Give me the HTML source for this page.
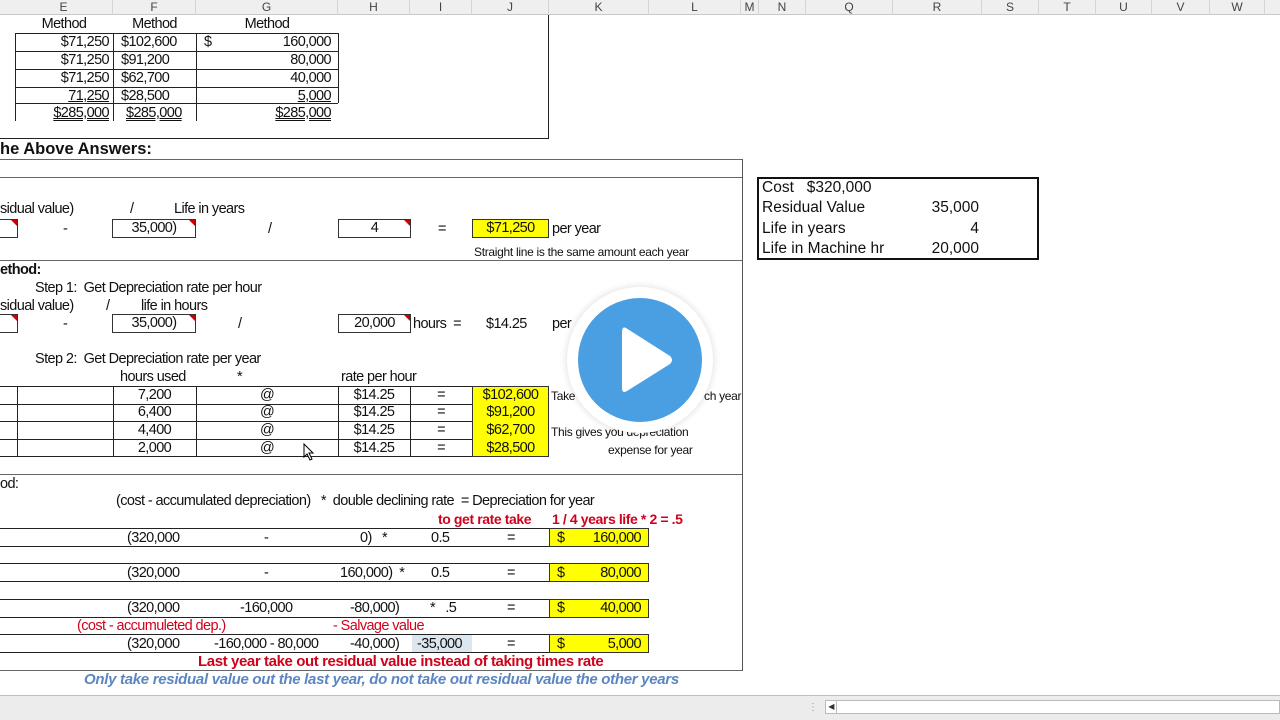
<!DOCTYPE html>
<html><head><meta charset="utf-8"><style>
*{margin:0;padding:0;box-sizing:border-box}
body{width:1280px;height:720px;overflow:hidden;background:#fff;position:relative;font-family:"Liberation Sans",Arial,sans-serif;font-size:14.5px;color:#111;letter-spacing:-0.6px}
.a{position:absolute;white-space:nowrap;line-height:16px}
.r{text-align:right}.c{text-align:center}
.h{position:absolute;height:1px;background:#222}
.v{position:absolute;width:1px;background:#222}
.hd{position:absolute;top:0;height:15px;font-size:12px;color:#444;text-align:center;line-height:15px;border-right:1px solid #d4d4d4;letter-spacing:0}
.bx{position:absolute;border:1px solid #333;height:19px;line-height:17px;text-align:center}
.bx i{position:absolute;right:0;top:0;border-style:solid;border-width:0 6px 6px 0;border-color:transparent #c00 transparent transparent}
.y{position:absolute;background:#ff0;border:1px solid #333;height:19px;line-height:17px}
.red{color:#d0021b;font-weight:bold}
.rl{color:#d0021b}
</style></head><body>
<div style="position:absolute;left:0;top:0;width:1280px;height:15px;background:#efefef;border-bottom:1px solid #c8c8c8"></div>
<div class="hd" style="left:15px;width:98px">E</div>
<div class="hd" style="left:113px;width:83px">F</div>
<div class="hd" style="left:196px;width:142px">G</div>
<div class="hd" style="left:338px;width:72px">H</div>
<div class="hd" style="left:410px;width:62px">I</div>
<div class="hd" style="left:472px;width:77px">J</div>
<div class="hd" style="left:549px;width:100px">K</div>
<div class="hd" style="left:649px;width:92px">L</div>
<div class="hd" style="left:741px;width:18px">M</div>
<div class="hd" style="left:759px;width:47px">N</div>
<div class="hd" style="left:806px;width:87px">Q</div>
<div class="hd" style="left:893px;width:89px">R</div>
<div class="hd" style="left:982px;width:57px">S</div>
<div class="hd" style="left:1039px;width:57px">T</div>
<div class="hd" style="left:1096px;width:56px">U</div>
<div class="hd" style="left:1152px;width:58px">V</div>
<div class="hd" style="left:1210px;width:55px">W</div>

<div class="a c" style="left:15px;top:16px;width:98px">Method</div>
<div class="a c" style="left:113px;top:16px;width:83px">Method</div>
<div class="a c" style="left:196px;top:16px;width:142px">Method</div>
<div class="h" style="left:15px;top:33px;width:323px"></div>
<div class="h" style="left:15px;top:51px;width:323px"></div>
<div class="h" style="left:15px;top:69px;width:323px"></div>
<div class="h" style="left:15px;top:87px;width:323px"></div>
<div class="h" style="left:15px;top:103px;width:323px"></div>
<div class="v" style="left:15px;top:33px;height:88px"></div>
<div class="v" style="left:113px;top:33px;height:88px"></div>
<div class="v" style="left:196px;top:33px;height:88px"></div>
<div class="v" style="left:338px;top:33px;height:70px"></div>
<div class="a r" style="left:15px;top:34px;width:94px">$71,250</div>
<div class="a r" style="left:15px;top:52px;width:94px">$71,250</div>
<div class="a r" style="left:15px;top:70px;width:94px">$71,250</div>
<div class="a r" style="left:15px;top:88px;width:94px;text-decoration:underline">71,250</div>
<div class="a r" style="left:15px;top:105px;width:94px;text-decoration:underline double">$285,000</div>
<div class="a" style="left:121px;top:34px">$102,600</div>
<div class="a" style="left:121px;top:52px">$91,200</div>
<div class="a" style="left:121px;top:70px">$62,700</div>
<div class="a" style="left:121px;top:88px">$28,500</div>
<div class="a" style="left:126px;top:105px;text-decoration:underline double">$285,000</div>
<div class="a" style="left:204px;top:34px">$</div>
<div class="a r" style="left:200px;top:34px;width:131px">160,000</div>
<div class="a r" style="left:200px;top:52px;width:131px">80,000</div>
<div class="a r" style="left:200px;top:70px;width:131px">40,000</div>
<div class="a r" style="left:200px;top:88px;width:131px;text-decoration:underline">5,000</div>
<div class="a r" style="left:200px;top:105px;width:131px;text-decoration:underline double">$285,000</div>
<div class="v" style="left:548px;top:15px;height:123px"></div>
<div class="h" style="left:0;top:138px;width:549px"></div>

<div class="a" style="left:0;top:141px;font-weight:bold;font-size:16.5px;letter-spacing:0">he Above Answers:</div>
<div class="h" style="left:0;top:159px;width:742px;background:#666"></div>
<div class="h" style="left:0;top:177px;width:742px;background:#666"></div>
<div class="v" style="left:742px;top:159px;height:512px;background:#555"></div>

<div class="a" style="left:0;top:201px">sidual value)</div>
<div class="a" style="left:130px;top:201px">/</div>
<div class="a" style="left:174px;top:201px">Life in years</div>
<div class="bx" style="left:-5px;top:219px;width:23px"><i></i></div>
<div class="a" style="left:63px;top:221px">-</div>
<div class="bx" style="left:112px;top:219px;width:84px">35,000)<i></i></div>
<div class="a" style="left:268px;top:221px">/</div>
<div class="bx" style="left:338px;top:219px;width:73px">4<i></i></div>
<div class="a" style="left:438px;top:221px">=</div>
<div class="y c" style="left:472px;top:219px;width:77px">$71,250</div>
<div class="a" style="left:552px;top:221px">per year</div>
<div class="a" style="left:474px;top:244px;font-size:12px;letter-spacing:-0.3px">Straight line is the same amount each year</div>
<div class="h" style="left:0;top:260px;width:742px;background:#666"></div>

<div class="a" style="left:0;top:262px;font-weight:bold">ethod:</div>
<div class="a" style="left:35px;top:280px">Step 1:&nbsp; Get Depreciation rate per hour</div>
<div class="a" style="left:0;top:298px">sidual value)</div>
<div class="a" style="left:106px;top:298px">/</div>
<div class="a" style="left:141px;top:298px">life in hours</div>
<div class="bx" style="left:-5px;top:314px;width:23px"><i></i></div>
<div class="a" style="left:63px;top:316px">-</div>
<div class="bx" style="left:112px;top:314px;width:84px">35,000)<i></i></div>
<div class="a" style="left:238px;top:316px">/</div>
<div class="bx" style="left:338px;top:314px;width:73px">20,000<i></i></div>
<div class="a" style="left:413px;top:316px">hours&nbsp;&nbsp;=</div>
<div class="a" style="left:486px;top:316px">$14.25</div>
<div class="a" style="left:552px;top:316px">per</div>
<div class="a" style="left:35px;top:351px">Step 2:&nbsp; Get Depreciation rate per year</div>
<div class="a" style="left:120px;top:369px">hours used</div>
<div class="a" style="left:237px;top:369px">*</div>
<div class="a" style="left:341px;top:369px">rate per hour</div>
<div class="h" style="left:0;top:386px;width:549px"></div>
<div class="h" style="left:0;top:404px;width:549px"></div>
<div class="h" style="left:0;top:421px;width:549px"></div>
<div class="h" style="left:0;top:439px;width:549px"></div>
<div class="h" style="left:0;top:456px;width:549px"></div>
<div class="v" style="left:17px;top:386px;height:70px"></div>
<div class="v" style="left:113px;top:386px;height:70px"></div>
<div class="v" style="left:196px;top:386px;height:70px"></div>
<div class="v" style="left:338px;top:386px;height:70px"></div>
<div class="v" style="left:410px;top:386px;height:70px"></div>
<div class="a c" style="left:113px;top:387px;width:83px">7,200</div>
<div class="a c" style="left:113px;top:404px;width:83px">6,400</div>
<div class="a c" style="left:113px;top:422px;width:83px">4,400</div>
<div class="a c" style="left:113px;top:440px;width:83px">2,000</div>
<div class="a c" style="left:196px;top:387px;width:142px">@</div>
<div class="a c" style="left:196px;top:404px;width:142px">@</div>
<div class="a c" style="left:196px;top:422px;width:142px">@</div>
<div class="a c" style="left:196px;top:440px;width:142px">@</div>
<div class="a c" style="left:338px;top:387px;width:72px">$14.25</div>
<div class="a c" style="left:338px;top:404px;width:72px">$14.25</div>
<div class="a c" style="left:338px;top:422px;width:72px">$14.25</div>
<div class="a c" style="left:338px;top:440px;width:72px">$14.25</div>
<div class="a c" style="left:410px;top:387px;width:62px">=</div>
<div class="a c" style="left:410px;top:404px;width:62px">=</div>
<div class="a c" style="left:410px;top:422px;width:62px">=</div>
<div class="a c" style="left:410px;top:440px;width:62px">=</div>
<div class="y c" style="left:472px;top:386px;width:77px;height:71px"></div>
<div class="a c" style="left:472px;top:387px;width:77px">$102,600</div>
<div class="a c" style="left:472px;top:404px;width:77px">$91,200</div>
<div class="a c" style="left:472px;top:422px;width:77px">$62,700</div>
<div class="a c" style="left:472px;top:440px;width:77px">$28,500</div>
<div class="a" style="left:551px;top:388px;font-size:12px;letter-spacing:-0.3px">Take</div>
<div class="a" style="left:704px;top:388px;font-size:12px;letter-spacing:-0.3px">ch year</div>
<div class="a" style="left:551px;top:424px;font-size:12px;letter-spacing:-0.3px">This gives you depreciation</div>
<div class="a" style="left:608px;top:442px;font-size:12px;letter-spacing:-0.3px">expense for year</div>
<div class="h" style="left:0;top:474px;width:742px;background:#666"></div>

<div class="a" style="left:0;top:476px">od:</div>
<div class="a" style="left:116px;top:493px">(cost - accumulated depreciation)&nbsp;&nbsp; *&nbsp; double declining rate&nbsp; = Depreciation for year</div>
<div class="a red" style="left:438px;top:511px;font-size:14px;letter-spacing:-0.4px">to get rate take</div>
<div class="a red" style="left:552px;top:511px;font-size:14px;letter-spacing:-0.4px">1 / 4 years life * 2 = .5</div>
<div class="h" style="left:0;top:528px;width:649px"></div><div class="h" style="left:0;top:546px;width:649px"></div>
<div class="h" style="left:0;top:563px;width:649px"></div><div class="h" style="left:0;top:581px;width:649px"></div>
<div class="h" style="left:0;top:599px;width:649px"></div><div class="h" style="left:0;top:617px;width:649px"></div>
<div class="h" style="left:0;top:634px;width:649px"></div><div class="h" style="left:0;top:652px;width:649px"></div>
<div class="y" style="left:549px;top:528px;width:100px"></div>
<div class="y" style="left:549px;top:563px;width:100px"></div>
<div class="y" style="left:549px;top:599px;width:100px"></div>
<div class="y" style="left:549px;top:634px;width:100px"></div>
<div style="position:absolute;left:412px;top:635px;width:60px;height:17px;background:#dde6ef"></div>

<div class="a" style="left:127px;top:530px">(320,000</div><div class="a" style="left:264px;top:530px">-</div>
<div class="a" style="left:360px;top:530px">0)&nbsp;&nbsp; *</div><div class="a" style="left:431px;top:530px">0.5</div>
<div class="a" style="left:507px;top:530px">=</div><div class="a" style="left:557px;top:530px">$</div><div class="a r" style="left:560px;top:530px;width:81px">160,000</div>

<div class="a" style="left:127px;top:565px">(320,000</div><div class="a" style="left:264px;top:565px">-</div>
<div class="a" style="left:340px;top:565px">160,000)&nbsp; *</div><div class="a" style="left:431px;top:565px">0.5</div>
<div class="a" style="left:507px;top:565px">=</div><div class="a" style="left:557px;top:565px">$</div><div class="a r" style="left:560px;top:565px;width:81px">80,000</div>

<div class="a" style="left:127px;top:600px">(320,000</div><div class="a" style="left:240px;top:600px">-160,000</div>
<div class="a" style="left:350px;top:600px">-80,000)</div><div class="a" style="left:430px;top:600px">*&nbsp;&nbsp; .5</div>
<div class="a" style="left:507px;top:600px">=</div><div class="a" style="left:557px;top:600px">$</div><div class="a r" style="left:560px;top:600px;width:81px">40,000</div>
<div class="a rl" style="left:77px;top:618px">(cost - accumuleted dep.)</div>
<div class="a rl" style="left:333px;top:618px">- Salvage value</div>

<div class="a" style="left:127px;top:636px">(320,000</div><div class="a" style="left:214px;top:636px">-160,000 - 80,000</div>
<div class="a" style="left:350px;top:636px">-40,000)</div><div class="a" style="left:417px;top:636px">-35,000</div>
<div class="a" style="left:507px;top:636px">=</div><div class="a" style="left:557px;top:636px">$</div><div class="a r" style="left:560px;top:636px;width:81px">5,000</div>
<div class="a red" style="left:198px;top:654px;font-size:15px;letter-spacing:-0.4px">Last year take out residual value instead of taking times rate</div>
<div class="h" style="left:0;top:670px;width:742px;background:#666"></div>
<div class="a" style="left:84px;top:672px;color:#5b86c0;font-weight:bold;font-style:italic;font-size:15px;letter-spacing:-0.3px">Only take residual value out the last year, do not take out residual value the other years</div>

<div style="position:absolute;left:757px;top:177px;width:282px;height:83px;border:2px solid #111"></div>
<div class="a" style="left:762px;top:180px;font-size:15.5px;letter-spacing:0">Cost&nbsp;&nbsp; $320,000</div>
<div class="a" style="left:762px;top:200px;font-size:15.5px;letter-spacing:0">Residual Value</div>
<div class="a r" style="left:900px;top:200px;width:79px;font-size:15.5px;letter-spacing:0">35,000</div>
<div class="a" style="left:762px;top:221px;font-size:15.5px;letter-spacing:0">Life in years</div>
<div class="a r" style="left:900px;top:221px;width:79px;font-size:15.5px;letter-spacing:0">4</div>
<div class="a" style="left:762px;top:241px;font-size:15.5px;letter-spacing:0">Life in Machine hr</div>
<div class="a r" style="left:900px;top:241px;width:79px;font-size:15.5px;letter-spacing:0">20,000</div>

<div style="position:absolute;left:567px;top:287px;width:146px;height:146px;border-radius:50%;background:#fff;box-shadow:0 0 8px rgba(0,0,0,.15)"></div>
<div style="position:absolute;left:578px;top:298px;width:124px;height:124px;border-radius:50%;background:#4a9fe3"></div>
<svg style="position:absolute;left:618px;top:322px" width="58" height="76" viewBox="0 0 58 76"><path d="M8 6 Q4 4 4 10 L4 66 Q4 72 9 69 L52 42 Q56 38 52 34 Z" fill="#fff"/></svg>

<svg style="position:absolute;left:303px;top:443px" width="12" height="18" viewBox="0 0 12 18"><path d="M1 1 L1 14 L4 11 L7 17 L9 16 L6 10 L10 10 Z" fill="#fff" stroke="#000" stroke-width="1"/></svg>

<div style="position:absolute;left:0;top:695px;width:1280px;height:25px;background:#ececec;border-top:1px solid #c0c0c0"></div>
<div class="a" style="left:808px;top:700px;color:#999;font-size:10px">⋮</div>
<div style="position:absolute;left:825px;top:700px;width:455px;height:14px;background:#fff;border:1px solid #bbb"></div>
<div style="position:absolute;left:825px;top:700px;width:12px;height:14px;border:1px solid #bbb;font-size:8px;line-height:12px;text-align:center;color:#333">◀</div>
</body></html>
